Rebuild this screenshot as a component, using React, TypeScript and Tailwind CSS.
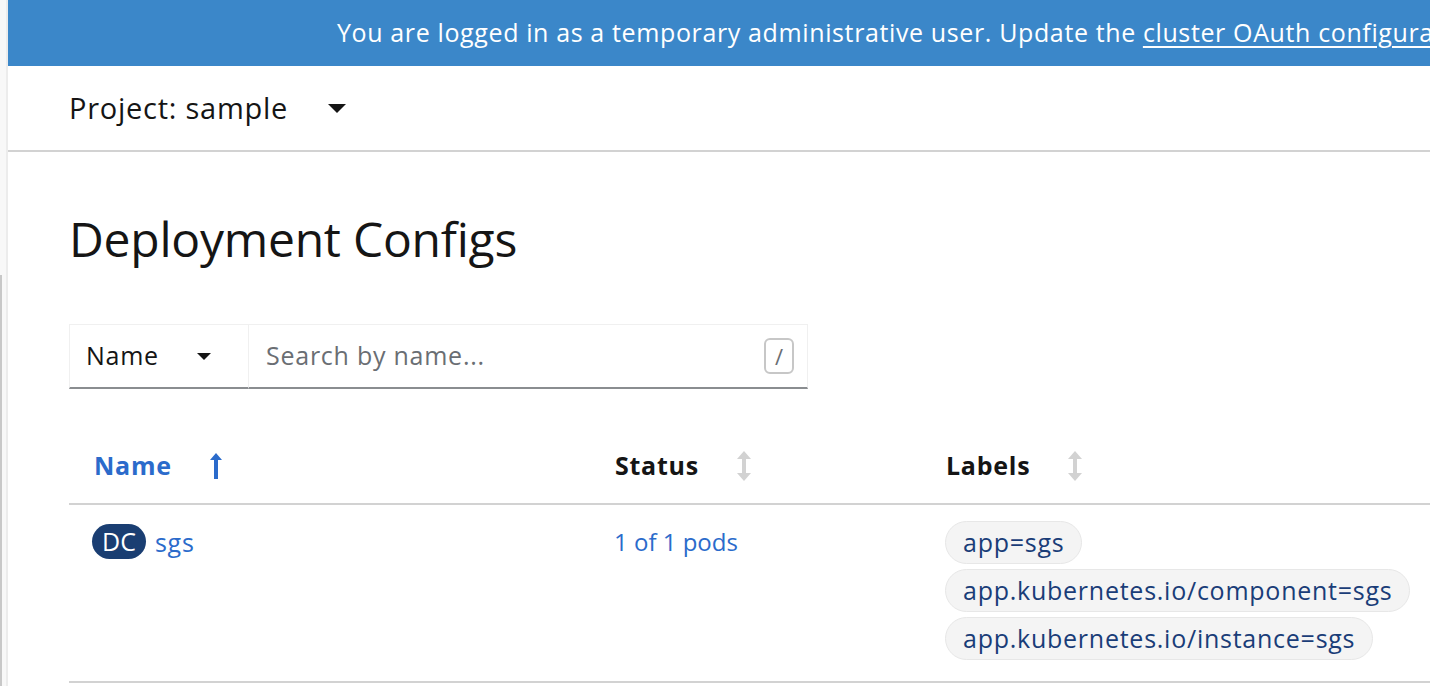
import React from "react";

const font = { fontFamily: '"Open Sans", "Noto Sans", sans-serif' };

function Caret({ className }: { className?: string }) {
  return (
    <svg viewBox="0 0 20 10" className={className} fill="currentColor">
      <polygon points="0,0 20,0 10,10" />
    </svg>
  );
}

function SortUp() {
  return (
    <svg viewBox="0 0 12 26" className="h-[26px] w-[12px] text-[#2b6bcb]" fill="currentColor">
      <polygon points="6,0 12,7 8,7 8,26 4,26 4,7 0,7" />
    </svg>
  );
}

function SortBoth() {
  return (
    <svg viewBox="0 0 14 30" className="h-[30px] w-[14px] text-[#d2d2d2]" fill="currentColor">
      <polygon points="7,0 14,8 9,8 9,22 14,22 7,30 0,22 5,22 5,8 0,8" />
    </svg>
  );
}

function Chip({ text }: { text: string }) {
  return (
    <span className="inline-flex h-[43px] items-center rounded-full border border-[#e7e7e7] bg-[#f4f4f4] px-[17px] text-[#1a3d78]">
      {text}
    </span>
  );
}

export default function App() {
  return (
    <div className="flex h-[686px] w-[1430px] overflow-hidden bg-white text-[25px] tracking-[0.03em]" style={font}>
      <div className="relative w-[8px] shrink-0 border-r-2 border-[#ececec] bg-[#f8f8f8]">
        <div className="absolute left-0 top-[275px] h-[411px] w-[2px] bg-[#c8c8c8]" />
      </div>

      <div className="flex min-w-0 flex-1 flex-col">
        <div className="flex h-[66px] shrink-0 items-center overflow-hidden whitespace-nowrap bg-[#3b87c9] pl-[329px] tracking-[0.025em] text-white">
          You are logged in as a temporary administrative user. Update the{" "}
          <span className="ml-[7px] underline underline-offset-4">cluster OAuth configuration</span>
          &nbsp;to allow others to log in.
        </div>

        <div className="flex h-[86px] shrink-0 items-center border-b-2 border-[#d2d2d2] pl-[61px]">
          <span className="text-[29px] text-[#151515]">Project: sample</span>
          <Caret className="ml-[40px] h-[9px] w-[18px] text-[#151515]" />
        </div>

        <div className="pl-[61px]">
          <h1 className="mt-[56px] text-[48px] font-medium leading-[62px] tracking-[-0.005em] text-[#151515]">
            Deployment Configs
          </h1>

          <div className="mt-[54px] flex h-[65px] w-[739px]">
            <div className="flex w-[180px] items-center border border-b-2 border-[#f0f0f0] border-b-[#8a8d90] pl-[16px] pr-[36px]">
              <span className="flex-1 text-[#151515]">Name</span>
              <Caret className="h-[7px] w-[16px] text-[#151515]" />
            </div>
            <div className="flex flex-1 items-center border border-l-0 border-b-2 border-[#f0f0f0] border-b-[#8a8d90] pl-[17px] pr-[13px]">
              <span className="flex-1 text-[#6a6e73]">Search by name...</span>
              <span className="flex h-[36px] w-[30px] items-center justify-center rounded-[6px] border-2 border-[#c7c7c7] text-[22px] tracking-normal text-[#6a6e73]">
                /
              </span>
            </div>
          </div>

          <div className="mt-[46px]">
            <div className="flex h-[70px] items-center border-b-2 border-[#d2d2d2] pb-[6px] font-bold">
              <div className="flex w-[522px] items-center pl-[25px] text-[#2b6bcb]">
                <span>Name</span>
                <span className="ml-[38px]"><SortUp /></span>
              </div>
              <div className="flex w-[331px] items-center pl-[24px] text-[#151515]">
                <span>Status</span>
                <span className="ml-[38px]"><SortBoth /></span>
              </div>
              <div className="flex flex-1 items-center pl-[24px] text-[#151515]">
                <span>Labels</span>
                <span className="ml-[38px]"><SortBoth /></span>
              </div>
            </div>

            <div className="flex border-b-2 border-[#d2d2d2] pb-[21px] pt-[16px]">
              <div className="flex w-[522px] items-start pl-[23px] pt-[3px]">
                <span className="flex h-[35px] items-center rounded-full bg-[#1a3e72] px-[10px] tracking-normal text-white">
                  DC
                </span>
                <span className="ml-[9px] text-[#2b6bcb]">sgs</span>
              </div>
              <div className="w-[331px] pl-[23px] pt-[3px] text-[24px] tracking-normal text-[#2b6bcb]">1 of 1 pods</div>
              <div className="flex flex-1 flex-col items-start gap-[5px] pl-[23px]">
                <Chip text="app=sgs" />
                <Chip text="app.kubernetes.io/component=sgs" />
                <Chip text="app.kubernetes.io/instance=sgs" />
              </div>
            </div>
          </div>
        </div>
      </div>
    </div>
  );
}
